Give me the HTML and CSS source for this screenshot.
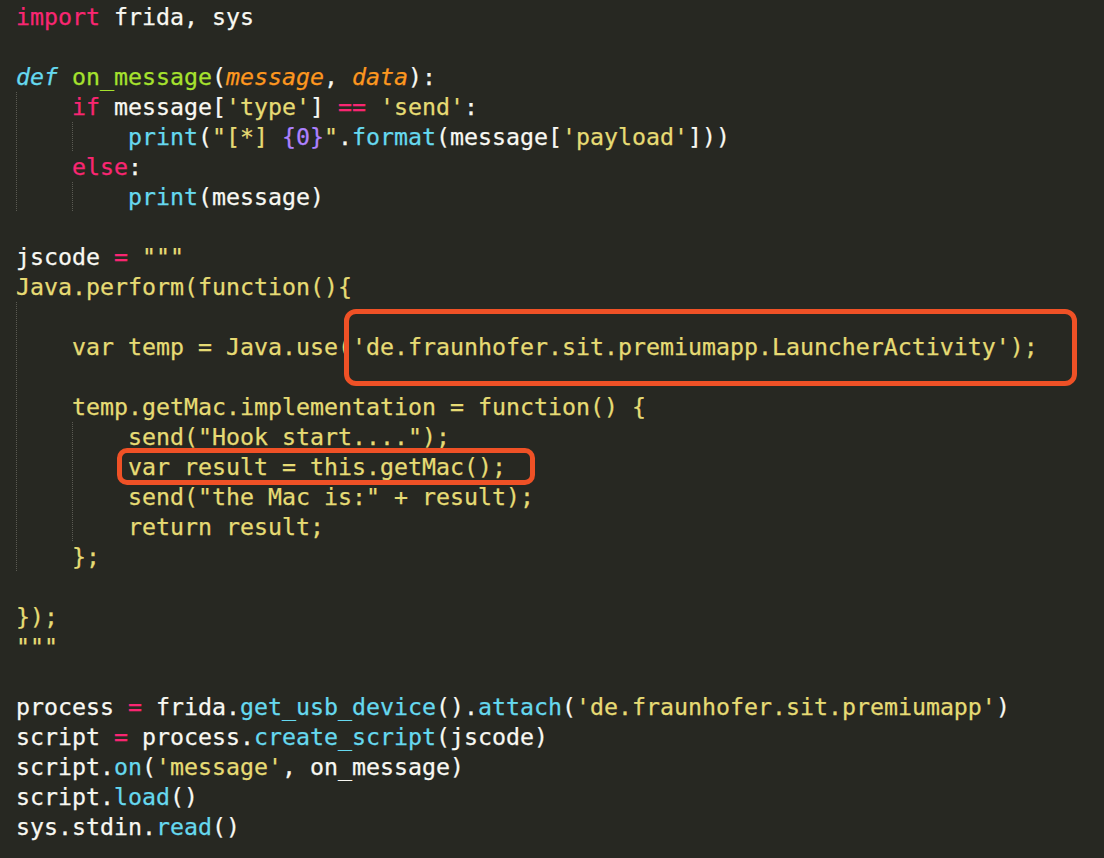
FILE: index.html
```html
<!DOCTYPE html>
<html>
<head>
<meta charset="utf-8">
<link rel="stylesheet" href="styles.css">
</head>
<body>
<div class="editor">
<div class="ln"><span class="kw">import</span> frida, sys</div>
<div class="ln"></div>
<div class="ln"><span class="st it">def</span> <span class="fn">on_message</span>(<span class="pa">message</span>, <span class="pa">data</span>):</div>
<div class="ln"><span class="ind">    </span><span class="kw">if</span> message[<span class="str">'type'</span>] <span class="kw">==</span> <span class="str">'send'</span>:</div>
<div class="ln"><span class="ind">    </span><span class="ind">    </span><span class="bi">print</span>(<span class="str">"[*] </span><span class="num">{0}</span><span class="str">"</span>.<span class="bi">format</span>(message[<span class="str">'payload'</span>]))</div>
<div class="ln"><span class="ind">    </span><span class="kw">else</span>:</div>
<div class="ln"><span class="ind">    </span><span class="ind">    </span><span class="bi">print</span>(message)</div>
<div class="ln"></div>
<div class="ln">jscode <span class="kw">=</span> <span class="str">"""</span></div>
<div class="ln str">Java.perform(function(){</div>
<div class="ln str"><span class="ind">    </span></div>
<div class="ln str"><span class="ind">    </span>var temp = Java.use('de.fraunhofer.sit.premiumapp.LauncherActivity');</div>
<div class="ln str"><span class="ind">    </span></div>
<div class="ln str"><span class="ind">    </span>temp.getMac.implementation = function() {</div>
<div class="ln str"><span class="ind">    </span><span class="ind">    </span>send("Hook start....");</div>
<div class="ln str"><span class="ind">    </span><span class="ind">    </span>var result = this.getMac();</div>
<div class="ln str"><span class="ind">    </span><span class="ind">    </span>send("the Mac is:" + result);</div>
<div class="ln str"><span class="ind">    </span><span class="ind">    </span>return result;</div>
<div class="ln str"><span class="ind">    </span>};</div>
<div class="ln str"></div>
<div class="ln str">});</div>
<div class="ln str">"""</div>
<div class="ln"></div>
<div class="ln">process <span class="kw">=</span> frida.<span class="bi">get_usb_device</span>().<span class="bi">attach</span>(<span class="str">'de.fraunhofer.sit.premiumapp'</span>)</div>
<div class="ln">script <span class="kw">=</span> process.<span class="bi">create_script</span>(jscode)</div>
<div class="ln">script.<span class="bi">on</span>(<span class="str">'message'</span>, on_message)</div>
<div class="ln">script.<span class="bi">load</span>()</div>
<div class="ln">sys.stdin.<span class="bi">read</span>()</div>
<div class="mark mark-class"></div>
<div class="mark mark-call"></div>
</div>
</body>
</html>
```

FILE: styles.css
```css
html, body {
  margin: 0;
  padding: 0;
  background: #272822;
}

.editor {
  position: relative;
  width: 1104px;
  height: 858px;
  box-sizing: border-box;
  padding: 2px 0 0 16px;
  background: #272822;
  color: #F8F8F2;
  font-family: "DejaVu Sans Mono", "Liberation Mono", monospace;
  font-size: 23.25px;
  -webkit-text-stroke: 0.25px currentColor;
  overflow: hidden;
}

.ln {
  height: 30px;
  line-height: 30px;
  white-space: pre;
}

.ind {
  display: inline-block;
  height: 30px;
  line-height: 30px;
  background-image: repeating-linear-gradient(to bottom, #5b5b53 0 1px, transparent 1px 2px);
  background-size: 1px 100%;
  background-repeat: no-repeat;
  background-position: 0 0;
}

.kw { color: #F92672; }
.fn { color: #A6E22E; }
.pa { color: #FD971F; font-style: italic; }
.str { color: #E6DB74; }
.bi { color: #66D9EF; }
.st { color: #66D9EF; }
.it { font-style: italic; }
.num { color: #AE81FF; }

.mark {
  position: absolute;
  box-sizing: border-box;
  border: 5px solid #EF5126;
}

.mark-class {
  left: 344px;
  top: 309px;
  width: 733px;
  height: 77px;
  border-radius: 12px;
}

.mark-call {
  left: 117px;
  top: 448px;
  width: 418px;
  height: 37px;
  border-radius: 10px;
}
```
